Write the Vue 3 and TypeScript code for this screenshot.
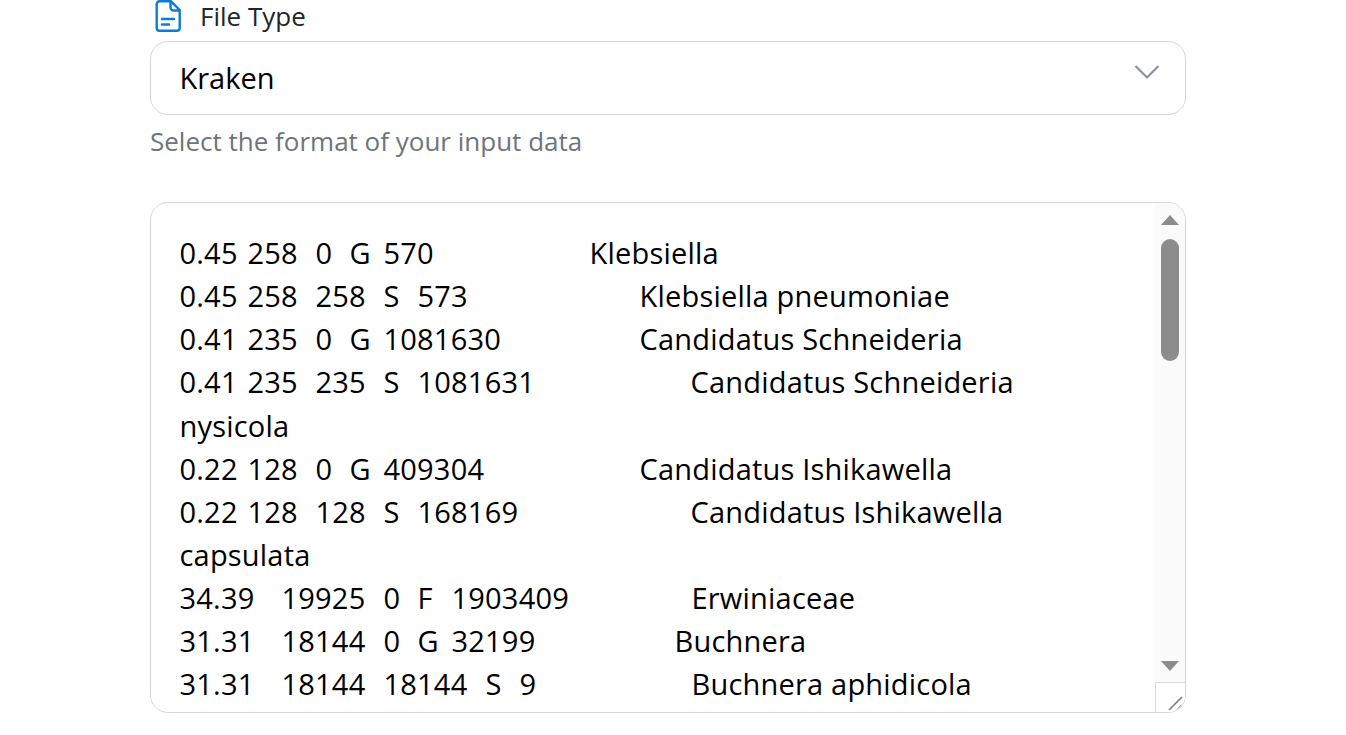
<script setup lang="ts">
type Cell = [string, number];
const rows: Cell[][] = [
  [["0.45", 180], ["258", 248], ["0", 316], ["G", 350], ["570", 384], ["Klebsiella", 590]],
  [["0.45", 180], ["258", 248], ["258", 316], ["S", 384], ["573", 418], ["Klebsiella pneumoniae", 640]],
  [["0.41", 180], ["235", 248], ["0", 316], ["G", 350], ["1081630", 384], ["Candidatus Schneideria", 640]],
  [["0.41", 180], ["235", 248], ["235", 316], ["S", 384], ["1081631", 418], ["Candidatus Schneideria", 691]],
  [["nysicola", 180]],
  [["0.22", 180], ["128", 248], ["0", 316], ["G", 350], ["409304", 384], ["Candidatus Ishikawella", 640]],
  [["0.22", 180], ["128", 248], ["128", 316], ["S", 384], ["168169", 418], ["Candidatus Ishikawella", 691]],
  [["capsulata", 180]],
  [["34.39", 180], ["19925", 282], ["0", 384], ["F", 418], ["1903409", 452], ["Erwiniaceae", 692]],
  [["31.31", 180], ["18144", 282], ["0", 384], ["G", 418], ["32199", 452], ["Buchnera", 675]],
  [["31.31", 180], ["18144", 282], ["18144", 384], ["S", 486], ["9", 520], ["Buchnera aphidicola", 692]],
];
function cellWidth(row: Cell[], i: number): string {
  return i + 1 < row.length ? `${row[i + 1][1] - row[i][1]}px` : "auto";
}
</script>

<template>
  <main class="form">
    <label class="label">
      <svg class="file-icon" viewBox="0 0 26 32" width="26" height="32" fill="none" stroke="#0b7bd6" stroke-width="2.4" stroke-linejoin="round" stroke-linecap="round">
        <path d="M4.5 1.3H16L24.7 10V28a2.8 2.8 0 0 1-2.8 2.8H4.5A2.8 2.8 0 0 1 1.7 28V4.1a2.8 2.8 0 0 1 2.8-2.8Z" />
        <path d="M15.5 1.5V7.5a3 3 0 0 0 3 3h6" />
        <path d="M7 19h12M7 24.5h7" />
      </svg>
      <span>File Type</span>
    </label>
    <div class="select">
      <span>Kraken</span>
      <svg class="chevron" viewBox="0 0 26 16" width="26" height="16" fill="none" stroke="#8b93a3" stroke-width="2.2">
        <path d="M1.5 2 13 13.5 24.5 2" />
      </svg>
    </div>
    <p class="hint">Select the format of your input data</p>
    <div class="editor">
      <div v-for="(row, r) in rows" :key="r" class="row">
        <span v-for="(cell, c) in row" :key="c" class="cell" :style="{ width: cellWidth(row, c) }">{{ cell[0] }}</span>
      </div>
      <div class="scrollbar">
        <div class="arrow up"></div>
        <div class="track"><div class="thumb"></div></div>
        <div class="arrow down"></div>
        <div class="resizer">
          <svg viewBox="0 0 30 30" width="30" height="30" stroke="#7d7d7d" stroke-width="1.6" fill="none">
            <path d="M14 28 27 15M22 28l5-5" />
          </svg>
        </div>
      </div>
    </div>
  </main>
</template>

<style>
html, body { margin: 0; background: #fff; overflow: hidden; }
</style>

<style scoped>
.form {
  box-sizing: border-box;
  width: 1036px;
  margin-left: 150px;
  font-family: "Open Sans", "Noto Sans", sans-serif;
  color: #000;
}
.label {
  display: flex;
  align-items: flex-start;
  height: 41px;
  color: #212529;
  font-size: 26px;
  line-height: 33px;
}
.file-icon { margin-left: 5px; margin-right: 19px; flex: none; }
.select {
  box-sizing: border-box;
  position: relative;
  height: 74px;
  border: 1px solid #d3d6de;
  border-radius: 18px;
  padding: 0 0 2px 28.5px;
  display: flex;
  align-items: center;
  font-size: 29px;
}
.chevron { position: absolute; right: 25px; top: 22px; }
.hint {
  margin: 8px 0 42px;
  height: 37px;
  line-height: 37px;
  font-size: 26px;
  color: #6c757d;
}
.editor {
  box-sizing: border-box;
  position: relative;
  height: 511px;
  border: 1px solid #d3d6de;
  border-radius: 18px;
  padding-top: 28px;
  overflow: hidden;
  font-size: 29px;
  letter-spacing: 0.2px;
  line-height: 43.15px;
}
.row { display: flex; padding-left: 28.5px; height: 43.15px; }
.cell { white-space: pre; flex: none; }
.scrollbar {
  position: absolute;
  top: 0;
  right: 0;
  bottom: 0;
  width: 30px;
  background: #fafafa;
  display: flex;
  flex-direction: column;
  align-items: center;
}
.arrow { width: 0; height: 0; border-left: 9px solid transparent; border-right: 9px solid transparent; flex: none; }
.arrow.up { margin-top: 12px; border-bottom: 10px solid #8c8c8c; }
.arrow.down { margin-top: 0; border-top: 10px solid #8c8c8c; }
.track { flex: 1; width: 18px; padding-top: 14px; }
.thumb { height: 122px; background: #8c8c8c; border-radius: 9px; }
.resizer {
  box-sizing: border-box;
  width: 30px;
  height: 30px;
  margin-top: 11px;
  border-top: 1px solid #d9d9d9;
  border-left: 1px solid #d9d9d9;
  background: #fff;
  flex: none;
}
.resizer svg { display: block; margin: -1px 0 0 -1px; }
</style>
